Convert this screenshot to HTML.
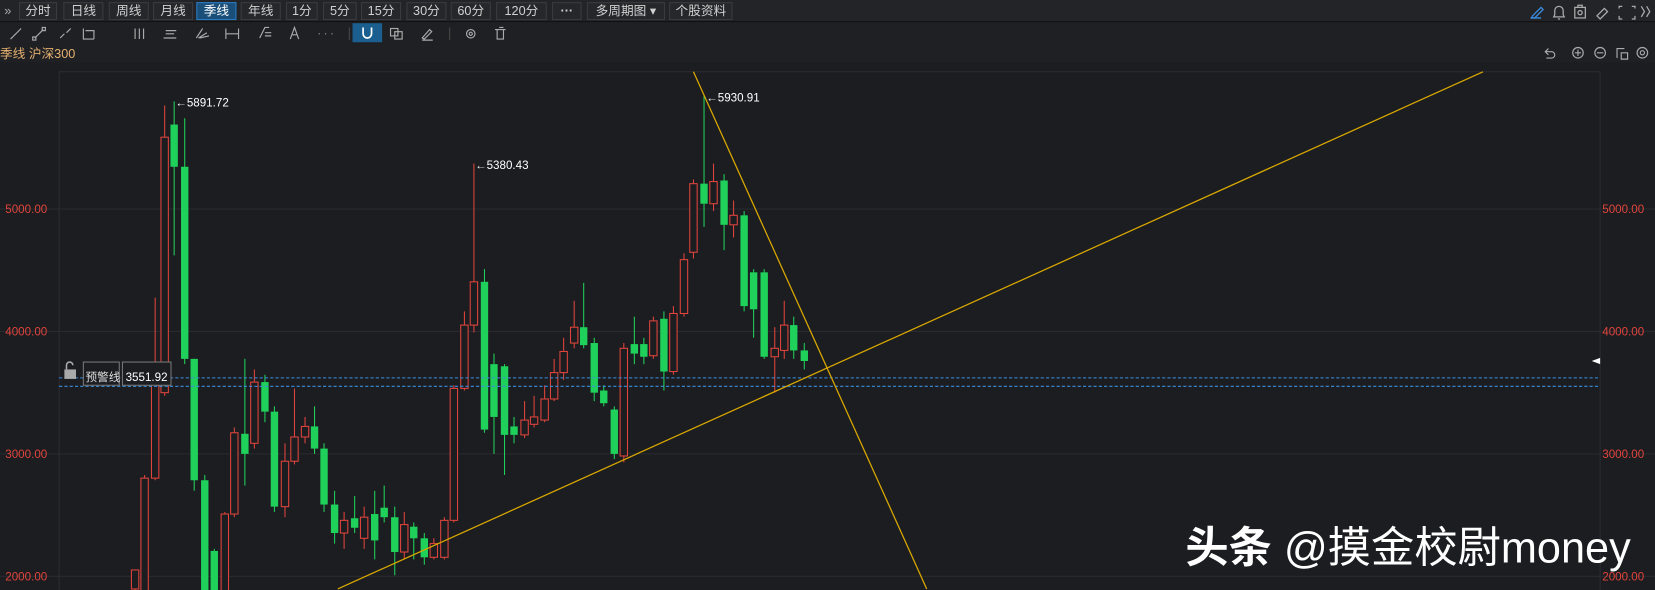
<!DOCTYPE html>
<html><head><meta charset="utf-8"><style>
*{margin:0;padding:0;box-sizing:border-box}
body{width:1655px;height:590px;background:#1c1d21;font-family:"Liberation Sans","Noto Sans CJK SC",sans-serif;overflow:hidden;position:relative;color:#ccc}
#w{position:absolute;left:0;top:0;width:1568px;height:559px;transform:scale(1.0555);transform-origin:0 0}
.tb{position:absolute;left:0;top:0;width:1568px;height:21px;background:#232428;border-bottom:1px solid #111}
.btn{position:absolute;top:2px;height:17px;border:1px solid #3a3b40;background:#26272b;color:#d0d0d0;font-size:12px;line-height:15px;text-align:center}
.btn.on{background:#1a4f7a;border-color:#2a7ac0;color:#fff}
.tb2{position:absolute;left:0;top:21px;width:1568px;height:20px;background:#1f2024}
.tr{position:absolute;left:0;top:41px;width:1568px;height:18px;background:#1f2024}
.tt{position:absolute;top:42px;left:0;font-size:12px;color:#e5b070}
.ic{position:absolute;color:#aaa;font-size:12px}
</style></head><body><div id="w">
<div class="tb">
<div class="ic" style="left:4px;top:3px;color:#aaa">»</div>
<div class="btn" style="left:18px;width:36px">分时</div>
<div class="btn" style="left:60px;width:38px">日线</div>
<div class="btn" style="left:103px;width:38px">周线</div>
<div class="btn" style="left:145px;width:38px">月线</div>
<div class="btn on" style="left:186px;width:38px">季线</div>
<div class="btn" style="left:228px;width:38px">年线</div>
<div class="btn" style="left:271px;width:30px">1分</div>
<div class="btn" style="left:306px;width:32px">5分</div>
<div class="btn" style="left:342px;width:38px">15分</div>
<div class="btn" style="left:385px;width:38px">30分</div>
<div class="btn" style="left:427px;width:38px">60分</div>
<div class="btn" style="left:470px;width:48px">120分</div>
<div class="btn" style="left:523px;width:28px;font-weight:bold">···</div>
<div class="btn" style="left:556px;width:74px">多周期图 ▾</div>
<div class="btn" style="left:634px;width:60px">个股资料</div>
<svg style="position:absolute;left:1440px;top:2px" width="128" height="18" fill="none" stroke="#aaa" stroke-width="1.2">
<path d="M12 13l8-8 2 2-8 8h-3z" stroke="#3a8ee0"/><path d="M10 15h10" stroke="#3a8ee0"/>
<path d="M33 12v-4a4 4 0 018 0v4l1 2h-10zM36 16h2"/>
<rect x="52" y="5" width="10" height="10"/><circle cx="57" cy="10" r="2"/><path d="M55 5v-2h4v2"/>
<path d="M73 13l7-7 3 3-7 7z"/>
<path d="M94 6v-2h3M106 4h3v2M109 13v3h-3M97 16h-3v-3"/>
<path d="M115 4l3 5-3 5M120 4l3 5-3 5"/>
</svg>
</div>
<div class="tb2">
<svg style="position:absolute;left:0;top:0" width="500" height="20" fill="none" stroke="#aaa" stroke-width="1.1">
<path d="M10 16l10-10"/><path d="M33 15l8-8"/><rect x="31" y="14" width="3" height="3"/><rect x="40" y="5" width="3" height="3"/>
<path d="M57 15l4-4M63 10l4-4"/><path d="M79 6v10h10M81 8h8v8"/><path d="M128 6v10M132 6v10M136 6v10"/>
<path d="M155 15h12M157 8h10M157 11h8"/><path d="M186 15l6-9M188 15l8-5M189 15l9-2"/><path d="M214 6v10M226 6v10M214 11h12"/>
<path d="M246 15l5-10h4M251 10h6M251 13h6"/><path d="M275 16l4-11 4 11M277 12h4"/><path d="M302 11h1M308 11h1M314 11h1"/>
<path d="M331 5v12" stroke="#444"/></svg>
<div style="position:absolute;left:334px;top:1px;width:28px;height:18px;background:#1a5f8f"></div>
<svg style="position:absolute;left:0;top:0" width="500" height="20" fill="none" stroke="#aaa" stroke-width="1.1">
<path d="M344 5v6a4 4 0 008 0v-6" stroke="#fff" stroke-width="1.6"/>
<rect x="370" y="6" width="7" height="7"/><rect x="374" y="9" width="7" height="7"/>
<path d="M400 15l7-8 2 2-7 7zM400 17h10"/><path d="M426 5v12" stroke="#444"/>
<circle cx="446" cy="11" r="4"/><circle cx="446" cy="11" r="1.5"/>
<path d="M469 7h10M471 7v9h6v-9M473 5h4"/></svg>
</div>
<div class="tr"></div>
<div class="tt">季线 沪深300</div>
<svg style="position:absolute;left:1460px;top:42px" width="108" height="16" fill="none" stroke="#aaa" stroke-width="1.1">
<path d="M7 4l-3 3 3 3M4 7h6a3 3 0 010 6h-5"/>
<circle cx="35" cy="8" r="5"/><path d="M32 8h6M35 5v6"/>
<circle cx="56" cy="8" r="5"/><path d="M53 8h6"/>
<path d="M72 13v-9h7M76 8h6v6h-6z"/><circle cx="96" cy="8" r="5"/><circle cx="96" cy="8" r="2"/>
</svg>
<svg style="position:absolute;left:0;top:0" width="1568" height="559">
<line x1="56" y1="68" x2="1516" y2="68" stroke="#2c2d32"/>
<line x1="56" y1="68" x2="56" y2="559" stroke="#2c2d32"/>
<line x1="1516" y1="68" x2="1516" y2="559" stroke="#2c2d32"/>
<g stroke="#2a2b30"><line x1="0" y1="198" x2="1568" y2="198"/><line x1="0" y1="314" x2="1568" y2="314"/><line x1="0" y1="430" x2="1568" y2="430"/><line x1="0" y1="546" x2="1568" y2="546"/></g>
<g fill="#e0443c" font-size="11" font-family="Liberation Sans">
<text x="5" y="202">5000.00</text><text x="5" y="318">4000.00</text><text x="5" y="434">3000.00</text><text x="5" y="550">2000.00</text>
<text x="1518" y="202">5000.00</text><text x="1518" y="318">4000.00</text><text x="1518" y="434">3000.00</text><text x="1518" y="550">2000.00</text>
</g>
<g id="cd"></g>
<line x1="56" y1="358" x2="1516" y2="358" stroke="#3a8ee0" stroke-dasharray="3,2"/>
<line x1="56" y1="366" x2="1516" y2="366" stroke="#3a8ee0" stroke-dasharray="3,2"/>
<line x1="320" y1="558" x2="1405" y2="68" stroke="#d9a800" stroke-width="1.2"/>
<line x1="657" y1="68" x2="878" y2="558" stroke="#d9a800" stroke-width="1.2"/>
<g fill="#fff" font-size="11" font-family="Liberation Sans">
<text x="166" y="101">←5891.72</text><text x="450" y="160">←5380.43</text><text x="669" y="96">←5930.91</text>
</g>
<path d="M1508 342l8-3v6z" fill="#fff"/>
<rect x="79" y="343" width="34" height="22" fill="#1c1d21" stroke="#777"/>
<text x="81" y="361" fill="#ddd" font-size="11" font-family="Liberation Sans,Noto Sans CJK SC">预警线</text>
<rect x="116" y="343" width="46" height="22" fill="#1c1d21" stroke="#777"/>
<text x="119" y="361" fill="#fff" font-size="11" font-family="Liberation Sans">3551.92</text>
<rect x="61" y="350" width="11" height="9" fill="#aaa"/><path d="M63 350v-4a3 3 0 016 0" stroke="#aaa" fill="none" stroke-width="1.5"/>
<text x="1123" y="533" fill="#fff" font-size="41" font-family="Liberation Sans,Noto Sans CJK SC"><tspan font-weight="bold">头条</tspan> @摸金校尉money</text>
</svg>
<script>
var d=[[128,'r',540,558,540,560],[137,'r',453,560,450,560],[147,'r',345,453,282,455],[156,'r',130,372,100,375],[165,'g',118,158,96,242],[175,'g',158,340,112,345],[184,'g',340,455,340,465],[194,'g',455,560,450,560],[203,'g',522,560,520,560],[213,'r',487,560,485,560],[222,'r',410,487,405,490],[232,'g',411,430,340,460],[241,'r',362,420,350,425],[251,'g',362,390,355,400],[260,'g',390,480,385,485],[270,'r',437,480,420,490],[279,'r',414,437,368,440],[289,'r',404,414,395,420],[298,'g',404,425,385,430],[307,'g',425,478,420,485],[317,'g',478,505,465,515],[326,'r',493,505,485,520],[336,'g',491,500,470,505],[345,'r',490,510,480,520],[355,'g',487,512,465,530],[364,'g',481,490,460,495],[374,'g',490,523,480,545],[383,'r',497,523,485,530],[392,'g',499,510,495,530],[402,'g',510,528,505,535],[411,'r',515,528,510,530],[421,'r',493,528,490,530],[430,'r',368,493,365,495],[440,'r',308,368,295,370],[449,'r',267,308,155,315],[459,'g',267,407,255,410],[468,'g',345,395,335,430],[478,'g',347,412,345,450],[487,'g',404,412,395,420],[497,'r',398,412,380,415],[506,'r',395,402,375,405],[516,'r',378,398,365,400],[525,'r',353,378,340,380],[534,'r',333,353,320,360],[544,'r',310,325,285,330],[553,'g',310,327,268,330],[563,'g',325,372,320,380],[572,'g',370,382,365,385],[582,'g',388,430,385,435],[591,'r',330,432,325,438],[601,'g',326,335,300,345],[610,'g',326,338,320,345],[619,'r',304,337,300,340],[629,'g',302,352,295,370],[638,'r',297,352,290,355],[648,'r',246,297,240,300],[657,'r',174,239,170,245],[667,'g',174,193,90,215],[676,'r',172,193,155,200],[686,'g',171,213,165,237],[695,'r',204,213,190,225],[705,'g',204,290,200,295],[714,'g',258,293,255,320],[724,'g',258,338,255,340],[734,'r',330,338,310,372],[743,'r',308,332,285,340],[752,'g',308,332,300,340],[762,'g',332,342,325,350]];
var s='';d.forEach(function(c){var col=c[1]=='r'?'#e0443c':'#1fd15a';s+='<line x1="'+c[0]+'" x2="'+c[0]+'" y1="'+c[4]+'" y2="'+c[5]+'" stroke="'+col+'"/>';
if(c[1]=='r')s+='<rect x="'+(c[0]-3.5)+'" y="'+c[2]+'" width="7" height="'+Math.max(1,c[3]-c[2])+'" fill="#1c1d21" stroke="'+col+'"/>';
else s+='<rect x="'+(c[0]-3.5)+'" y="'+c[2]+'" width="7" height="'+Math.max(1,c[3]-c[2])+'" fill="'+col+'"/>';});
document.getElementById('cd').innerHTML=s;
</script>
</div></body></html>
